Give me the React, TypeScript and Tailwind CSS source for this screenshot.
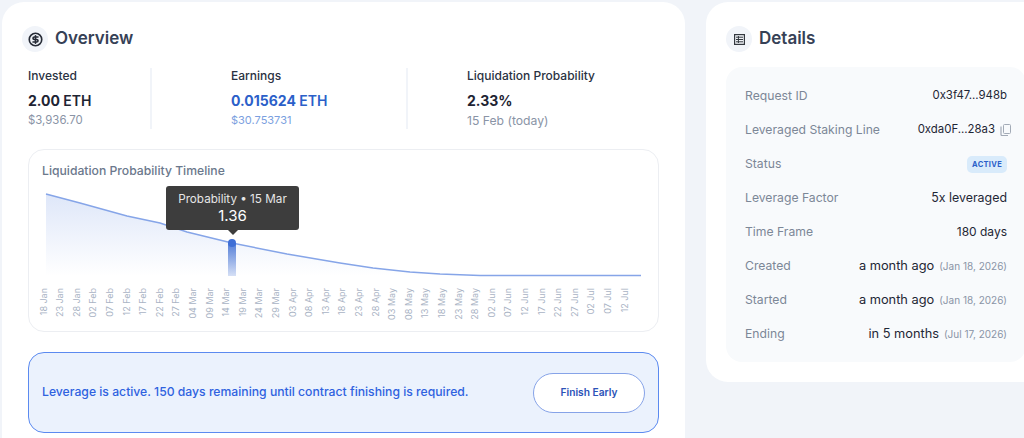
import { CircleDollarSign } from "lucide-react";

const ticks = [
  "18 Jan", "23 Jan", "28 Jan", "02 Feb", "07 Feb", "12 Feb", "17 Feb", "22 Feb", "27 Feb",
  "04 Mar", "09 Mar", "14 Mar", "19 Mar", "24 Mar", "29 Mar", "03 Apr", "08 Apr", "13 Apr",
  "18 Apr", "23 Apr", "28 Apr", "03 May", "08 May", "13 May", "18 May", "23 May", "28 May",
  "02 Jun", "07 Jun", "12 Jun", "17 Jun", "22 Jun", "27 Jun", "02 Jul", "07 Jul", "12 Jul",
];

const line =
  "M46 194 L80 203 L127 216 L160 223 L187 232 L232 243 L287 254 L340 263 L373 268 L410 272 L440 274 L480 275.5 L641 275.5";

function Chart() {
  return (
    <div className="relative mt-[1px] h-[144px]">
      <svg viewBox="29 180 629 144" className="block h-[144px] w-[629px]">
        <defs>
          <linearGradient id="area" x1="0" y1="0" x2="0" y2="1">
            <stop offset="0" stopColor="#5b85e0" stopOpacity="0.2" />
            <stop offset="1" stopColor="#5b85e0" stopOpacity="0" />
          </linearGradient>
          <linearGradient id="bar" x1="0" y1="0" x2="0" y2="1">
            <stop offset="0" stopColor="#2f62cf" stopOpacity="0.8" />
            <stop offset="1" stopColor="#2f62cf" stopOpacity="0.2" />
          </linearGradient>
        </defs>
        <path d={`${line} L641 276 L46 276 Z`} fill="url(#area)" />
        <path d={line} fill="none" stroke="#86a5e8" strokeWidth="1.5" />
        <rect x="228" y="243" width="8" height="33" fill="url(#bar)" />
        <circle cx="232" cy="243" r="4" fill="#3f6fd6" />
        {ticks.map((t, i) => {
          const x = 46.5 + i * 16.6;
          return (
            <text
              key={t}
              transform={`translate(${x} 288) rotate(-90)`}
              textAnchor="end"
              fontSize="9"
              fill="#a9b3c4"
            >
              {t}
            </text>
          );
        })}
      </svg>
      <div className="absolute left-[137px] top-[6px] flex h-[44px] w-[133px] flex-col items-center justify-center rounded-[3px] bg-[#3d3d3d] text-white">
        <span className="text-[11.7px] leading-[16px] text-[#e6e6e6]">Probability • 15 Mar</span>
        <span className="text-[15px] leading-[18px]">1.36</span>
        <span className="absolute top-full left-1/2 -ml-[5px] border-x-[5px] border-t-[5px] border-x-transparent border-t-[#3d3d3d]" />
      </div>
    </div>
  );
}

function Row({ label, children, size = "text-[12.4px]" }: { label: string; children: React.ReactNode; size?: string }) {
  return (
    <div className="flex h-[34px] items-center justify-between">
      <span className="text-[12.2px] text-[#7c8797]">{label}</span>
      <span className={`flex items-center text-[#1f2735] ${size}`}>{children}</span>
    </div>
  );
}

export default function App() {
  return (
    <div className="flex h-[438px] w-[1024px] gap-[21px] overflow-hidden bg-[#f1f4f9] pl-[2px] pt-[2px] font-['Inter',sans-serif]">
      <div className="h-[480px] w-[683px] shrink-0 rounded-[22px] bg-white px-[26px] pt-[24px]">
        <div className="-ml-[6px] flex items-center gap-[7px]">
          <div className="flex h-[26px] w-[26px] items-center justify-center rounded-full bg-[#f1f4f9]">
            <CircleDollarSign size={15} strokeWidth={2.6} className="text-[#262b36]" />
          </div>
          <h2 className="text-[17px] font-semibold text-[#364156]">Overview</h2>
        </div>

        <div className="mt-[16px] flex h-[61px]">
          <div className="w-[124px] border-r-2 border-[#f1f4f9]">
            <div className="text-[12px] leading-[16px] font-medium text-[#2a3242]">Invested</div>
            <div className="mt-[7px] text-[14px] leading-[20px] font-bold text-[#1e2433]">
              2.00 <span className="font-semibold">ETH</span>
            </div>
            <div className="mt-[1px] text-[11.4px] leading-[17px] text-[#8a94a6]">$3,936.70</div>
          </div>
          <div className="w-[256px] border-r-2 border-[#f1f4f9] pl-[79px]">
            <div className="text-[12px] leading-[16px] font-medium text-[#2a3242]">Earnings</div>
            <div className="mt-[7px] text-[14px] leading-[20px] font-bold text-[#2b5fc9]">
              0.015624 <span className="font-semibold">ETH</span>
            </div>
            <div className="mt-[1px] text-[11px] leading-[17px] text-[#7b9fe0]">$30.753731</div>
          </div>
          <div className="pl-[59px]">
            <div className="text-[12px] leading-[16px] font-medium text-[#2a3242]">Liquidation Probability</div>
            <div className="mt-[7px] text-[14px] leading-[20px] font-bold text-[#1e2433]">2.33%</div>
            <div className="mt-[1px] text-[12.2px] leading-[17px] text-[#8a94a6]">15 Feb (today)</div>
          </div>
        </div>

        <div className="mt-[20px] h-[183px] w-[631px] rounded-[16px] border border-[#eceef2] bg-white pt-[13px]">
          <div className="pl-[13px] text-[12.2px] leading-[16px] font-medium text-[#6b788c]">
            Liquidation Probability Timeline
          </div>
          <Chart />
        </div>

        <div className="mt-[20px] flex h-[81px] w-[631px] items-center justify-between rounded-[16px] border border-[#5b8af0] bg-[#ebf2fd] pl-[13px] pr-[13px]">
          <span className="text-[12.2px] font-medium text-[#2f62e0]">
            Leverage is active. 150 days remaining until contract finishing is required.
          </span>
          <button className="h-[40px] w-[112px] rounded-[20px] border border-[#86a3e8] bg-white text-[10.2px] font-semibold text-[#2b53b8]">
            Finish Early
          </button>
        </div>
      </div>

      <div className="h-[380px] w-[340px] shrink-0 rounded-[22px] bg-white px-[20px] pt-[24px]">
        <div className="flex items-center gap-[7px]">
          <div className="flex h-[26px] w-[26px] items-center justify-center rounded-full bg-[#f1f4f9]">
            <svg width="11" height="11" viewBox="0 0 11 11" fill="none" stroke="#33383f">
              <rect x="0.6" y="0.6" width="9.8" height="9.8" strokeWidth="1.2" />
              <path d="M2 3.2h7M2 5.5h7M2 7.8h7M4.4 2v7" strokeWidth="1" />
            </svg>
          </div>
          <h2 className="text-[17px] font-semibold text-[#364156]">Details</h2>
        </div>

        <div className="mt-[15px] h-[295px] w-[300px] rounded-[16px] bg-[#f8fafc] pl-[19px] pr-[19px] pt-[12px]">
          <Row label="Request ID" size="text-[11.4px]">0x3f47...948b</Row>
          <Row label="Leveraged Staking Line" size="text-[11.4px]">
            0xda0F...28a3
            <svg width="11" height="12" viewBox="0 0 11 12" fill="none" stroke="#a2aab6" className="ml-[5px] -mr-[4px]">
              <rect x="3.5" y="0.5" width="7" height="9" rx="1" />
              <path d="M1 2.5v8a1 1 0 0 0 1 1h6" strokeWidth="1.2" />
            </svg>
          </Row>
          <Row label="Status">
            <span className="rounded-[5px] bg-[#d9ebfb] px-[5px] py-[2px] text-[7.5px] leading-[13px] font-bold tracking-[0.04em] text-[#2b5fc9]">
              ACTIVE
            </span>
          </Row>
          <Row label="Leverage Factor">5x leveraged</Row>
          <Row label="Time Frame" size="text-[12px]">180 days</Row>
          <Row label="Created" size="text-[12.8px]">
            a month ago <span className="ml-[5px] text-[10px] text-[#8a94a6]">(Jan 18, 2026)</span>
          </Row>
          <Row label="Started" size="text-[12.8px]">
            a month ago <span className="ml-[5px] text-[10px] text-[#8a94a6]">(Jan 18, 2026)</span>
          </Row>
          <Row label="Ending" size="text-[12.8px]">
            in 5 months <span className="ml-[5px] text-[10px] text-[#8a94a6]">(Jul 17, 2026)</span>
          </Row>
        </div>
      </div>
    </div>
  );
}
